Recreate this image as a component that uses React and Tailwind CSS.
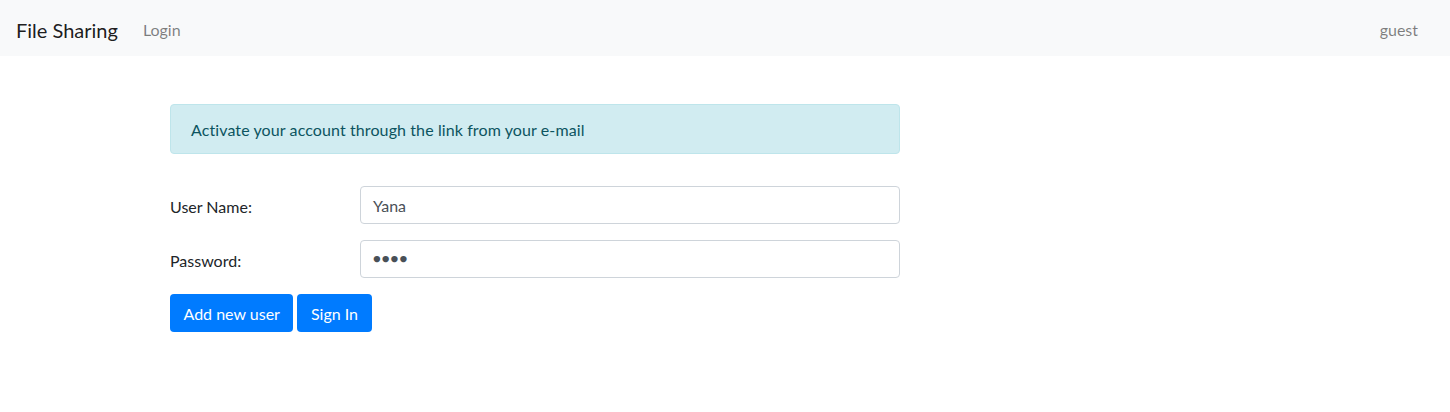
export default function App() {
  return (
    <div className="min-h-screen bg-white text-[16px] text-[#212529]" style={{ fontFamily: '"Segoe UI", Lato, "Noto Sans", sans-serif' }}>
      {/* navbar */}
      <nav className="flex h-[56px] items-center bg-[#f8f9fa] px-4 pt-[3px]">
        <span className="mr-[17px] text-[20px] leading-[30px] text-[rgba(0,0,0,0.9)]">File Sharing</span>
        <a className="px-2 text-[rgba(0,0,0,0.5)]">Login</a>
        <span className="ml-auto pr-4 text-[rgba(0,0,0,0.5)]">guest</span>
      </nav>

      {/* content */}
      <div className="ml-[170px] w-[730px] pt-12">
        <div className="flex h-[50px] items-center rounded border border-[#bee5eb] bg-[#d1ecf1] px-5 pt-[2px] text-[#0c5460] tracking-[0.1px]">
          Activate your account through the link from your e-mail
        </div>

        <div className="mt-8 flex flex-col gap-4">
          <div className="flex items-center">
            <label className="w-[190px] pt-[3px]">User Name:</label>
            <div className="flex h-[38px] flex-1 items-center rounded border border-[#ced4da] px-3 pt-[2px] text-[#495057]">Yana</div>
          </div>
          <div className="flex items-center">
            <label className="w-[190px] pt-[3px]">Password:</label>
            <div className="flex h-[38px] flex-1 items-center rounded border border-[#ced4da] px-3 text-[13px] tracking-[1px] text-[#495057]">●●●●</div>
          </div>
          <div className="flex gap-1">
            <button className="h-[38px] rounded bg-[#007bff] px-[13.5px] pt-[2px] text-white">Add new user</button>
            <button className="h-[38px] rounded bg-[#007bff] px-[13.5px] pt-[2px] text-white">Sign In</button>
          </div>
        </div>
      </div>
    </div>
  )
}
